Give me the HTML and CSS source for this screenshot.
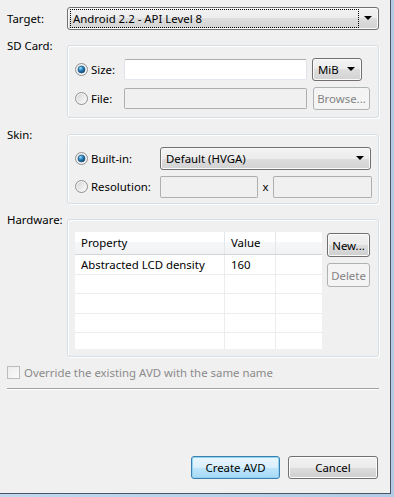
FILE: index.html
```html
<!DOCTYPE html>
<html>
<head>
<meta charset="utf-8">
<link rel="stylesheet" href="styles.css">
</head>
<body>
<svg class="defs" width="0" height="0" aria-hidden="true">
  <defs>
    <linearGradient id="rfill" x1="0" y1="0" x2="1" y2="1">
      <stop offset="0" stop-color="#d6d6d6"/>
      <stop offset="1" stop-color="#fbfbfb"/>
    </linearGradient>
    <radialGradient id="rdot" cx="0.35" cy="0.3" r="0.75">
      <stop offset="0" stop-color="#9fe2fb"/>
      <stop offset="0.45" stop-color="#2d86c2"/>
      <stop offset="1" stop-color="#0d3f66"/>
    </radialGradient>
    <symbol id="radio-off" viewBox="0 0 13 13">
      <circle cx="6.5" cy="6.5" r="6" fill="#f4f4f4" stroke="#8e8f8f"/>
      <circle cx="6.5" cy="6.5" r="4.5" fill="url(#rfill)"/>
    </symbol>
    <symbol id="radio-on" viewBox="0 0 13 13">
      <circle cx="6.5" cy="6.5" r="6" fill="#f4f4f4" stroke="#8e8f8f"/>
      <circle cx="6.5" cy="6.5" r="4.5" fill="url(#rfill)"/>
      <circle cx="6.5" cy="6.5" r="3.5" fill="url(#rdot)" stroke="#1b4f78" stroke-width="0.6"/>
    </symbol>
  </defs>
</svg>
<div class="client">
  <div class="form">
    <div class="row target-row">
      <span class="lbl">Target:</span>
      <div class="combo combo-target">
        <span class="focus">Android 2.2 - API Level 8</span>
        <span class="arrow"></span>
      </div>
    </div>

    <div class="row group-row sd-row">
      <span class="lbl">SD Card:</span>
      <div class="group sd-group">
        <label class="radio"><svg class="rb"><use href="#radio-on"/></svg><span>Size:</span></label>
        <div class="field"></div>
        <div class="combo combo-mib"><span class="ctext">MiB</span><span class="arrow"></span></div>
        <label class="radio"><svg class="rb"><use href="#radio-off"/></svg><span>File:</span></label>
        <div class="field disabled"></div>
        <div class="btn disabled browse">Browse...</div>
      </div>
    </div>

    <div class="row group-row skin-row">
      <span class="lbl">Skin:</span>
      <div class="group skin-group">
        <label class="radio"><svg class="rb"><use href="#radio-on"/></svg><span>Built-in:</span></label>
        <div class="combo combo-skin"><span class="ctext">Default (HVGA)</span><span class="arrow"></span></div>
        <label class="radio"><svg class="rb"><use href="#radio-off"/></svg><span>Resolution:</span></label>
        <div class="res">
          <div class="field disabled res-w"></div>
          <span class="times">x</span>
          <div class="field disabled res-h"></div>
        </div>
      </div>
    </div>

    <div class="row group-row hw-row">
      <span class="lbl">Hardware:</span>
      <div class="group hw-group">
        <div class="table">
          <div class="tr thead">
            <div class="td">Property</div>
            <div class="td">Value</div>
            <div class="td"></div>
          </div>
          <div class="tr">
            <div class="td">Abstracted LCD density</div>
            <div class="td">160</div>
            <div class="td"></div>
          </div>
          <div class="tr"><div class="td"></div><div class="td"></div><div class="td"></div></div>
          <div class="tr"><div class="td"></div><div class="td"></div><div class="td"></div></div>
          <div class="tr"><div class="td"></div><div class="td"></div><div class="td"></div></div>
          <div class="tr last"><div class="td"></div><div class="td"></div><div class="td"></div></div>
        </div>
        <div class="side-btns">
          <div class="btn">New...</div>
          <div class="btn disabled">Delete</div>
        </div>
      </div>
    </div>

    <div class="check-row">
      <span class="checkbox"></span>
      <span class="check-text">Override the existing AVD with the same name</span>
    </div>

    <div class="separator"></div>

    <div class="buttons">
      <div class="btn default create">Create AVD</div>
      <div class="btn cancel">Cancel</div>
    </div>
  </div>
</div>
</body>
</html>
```
FILE: styles.css
```css
* { box-sizing: border-box; }
html, body { margin: 0; padding: 0; }
body {
  width: 394px;
  height: 497px;
  overflow: hidden;
  background: linear-gradient(90deg, #c2d7ee, #b3cbe6);
  font-family: "Noto Sans", "Segoe UI", "DejaVu Sans", sans-serif;
  font-size: 11.4px;
  color: #000;
}
.defs { position: absolute; width: 0; height: 0; }

.client {
  width: 391px;
  height: 494px;
  background: #f0f0f0;
  border-right: 1px solid #4b5664;
  border-bottom: 1px solid #4b5664;
  padding: 7px 0 0 7px;
}
.form { width: 372px; display: flex; flex-direction: column; }

.row { display: grid; grid-template-columns: 60px 312px; }
.lbl { line-height: 14px; white-space: nowrap; }
.target-row { height: 23px; align-items: center; }
.group-row { align-items: start; margin-top: 8px; }
.group-row .lbl { margin-top: 1px; }
.skin-row { margin-top: 9px; }

/* combo box (read-only drop-down) */
.combo {
  height: 23px;
  border: 1px solid #707070;
  border-radius: 3px;
  background: linear-gradient(#f3f3f3 0%, #ececec 50%, #dedede 50%, #d2d2d2 100%);
  box-shadow: inset 0 0 0 1px #fafafa;
  display: flex;
  align-items: center;
  position: relative;
  line-height: 15px;
  white-space: nowrap;
}
.combo .arrow {
  position: absolute;
  right: 6px;
  top: 8px;
  width: 0; height: 0;
  border-left: 4px solid transparent;
  border-right: 4px solid transparent;
  border-top: 4px solid #000;
}
.combo-target { width: 312px; }
.combo-target .focus {
  margin-left: 2px;
  width: 289px;
  height: 19px;
  border: 1px dotted #000;
  padding-left: 2px;
  line-height: 17px;
}
.combo .ctext { padding-left: 5px; }
.combo-mib { width: 50px; }
.combo-skin { width: 211px; }

/* group box */
.group {
  margin-top: 7px;
  border: 1px solid #d5dfe5;
  border-radius: 3px;
  box-shadow: inset 1px 1px 0 #fff, 1px 1px 0 #fff;
}
.sd-group {
  display: grid;
  grid-template-columns: 49px 183px 58px;
  grid-template-rows: 23px 23px;
  row-gap: 6px;
  padding: 12px 8px 7px 7px;
  column-gap: 0;
  align-items: center;
}
.sd-group .combo-mib { margin-left: 5px; }
.sd-group .browse { margin-left: 6px; width: 57px; height: 23px; }

.skin-group {
  display: grid;
  grid-template-columns: 85px 212px;
  grid-template-rows: 23px 23px;
  row-gap: 5px;
  padding: 12px 6px 5px 7px;
  align-items: center;
}
.res { display: flex; align-items: center; height: 22px; }
.res-w { width: 98px; height: 22px !important; }
.res-h { width: 99px; height: 22px !important; }
.times { width: 15px; text-align: center; line-height: 15px; }

.radio { display: flex; align-items: center; gap: 3px; white-space: nowrap; line-height: 15px; }
.rb { width: 13px; height: 13px; flex: none; }

/* text fields */
.field {
  height: 21px;
  background: #fff;
  border: 1px solid #e2e3ea;
  border-top-color: #abadb3;
  border-bottom-color: #e3e9ef;
  border-radius: 2px;
}
.field.disabled {
  background: #f0f0f0;
  border: 1px solid #afafaf;
  border-top-color: #adadad;
}

/* buttons */
.btn {
  height: 23px;
  border: 1px solid #707070;
  border-radius: 3px;
  background: linear-gradient(#f2f2f2 0%, #ebebeb 50%, #dddddd 50%, #cfcfcf 100%);
  box-shadow: inset 0 0 0 1px #fcfcfc;
  display: flex;
  align-items: center;
  justify-content: center;
  line-height: 15px;
  white-space: nowrap;
}
.btn.disabled {
  background: #f4f4f4;
  border-color: #adb2b5;
  color: #838383;
  box-shadow: none;
}
.btn.default {
  border-color: #3c7fb1;
  background: linear-gradient(#eaf6fd 0%, #d9f0fc 50%, #bee6fd 50%, #a7d9f5 100%);
  box-shadow: inset 0 0 0 1px #8fd4f3;
}

/* hardware */
.hw-group {
  display: flex;
  gap: 5px;
  padding: 12px 8px 7px 7px;
}
.table {
  width: 247px;
  height: 117px;
  background: #fff;
  display: flex;
  flex-direction: column;
  overflow: hidden;
}
.tr {
  display: grid;
  grid-template-columns: 150px 51px 46px;
  height: 20px;
  border-bottom: 1px solid #ececec;
  flex: none;
}
.tr:nth-child(odd) { height: 19px; }
.tr.last { border-bottom: none; }
.td {
  border-right: 1px solid #ececec;
  padding-left: 6px;
  line-height: 19px;
  white-space: nowrap;
  overflow: hidden;
}
.td:last-child { border-right: none; }
.tr.thead {
  height: 23px;
  background: linear-gradient(#ffffff 0%, #ffffff 45%, #f6f7f9 45%, #f1f2f4 100%);
  border-bottom: 1px solid #d5d5d5;
}
.thead .td { line-height: 22px; border-right-color: #e3e6ea; }
.side-btns { display: flex; flex-direction: column; gap: 6px; padding-top: 1px; }
.side-btns .btn { width: 43px; height: 24px; }

/* override checkbox */
.check-row {
  margin-top: 8px;
  height: 15px;
  display: flex;
  align-items: center;
  gap: 4px;
  color: #8b8b8b;
  line-height: 15px;
}
.checkbox {
  width: 13px;
  height: 13px;
  border: 1px solid #bcbcbc;
  background: linear-gradient(135deg, #ececec, #fafafa);
  flex: none;
}

.separator {
  margin-top: 8px;
  height: 2px;
  border-top: 1px solid #a0a0a0;
  border-bottom: 1px solid #ffffff;
}

.buttons {
  margin-top: 66px;
  display: flex;
  justify-content: flex-end;
  gap: 8px;
  padding-right: 1px;
}
.buttons .create { width: 89px; }
.buttons .cancel { width: 90px; }
```
